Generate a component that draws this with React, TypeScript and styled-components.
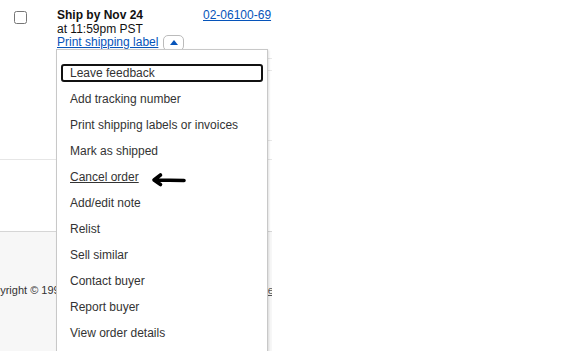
import React from 'react';
import styled, { createGlobalStyle } from 'styled-components';

const GlobalStyle = createGlobalStyle`
    html, body {
        margin: 0;
        padding: 0;
        background: #fff;
        overflow: hidden;
    }
    body {
        font-family: "Liberation Sans", Arial, sans-serif;
        color: #333;
    }
`;

const menuItems = [
    'Leave feedback',
    'Add tracking number',
    'Print shipping labels or invoices',
    'Mark as shipped',
    'Cancel order',
    'Add/edit note',
    'Relist',
    'Sell similar',
    'Contact buyer',
    'Report buyer',
    'View order details',
];

const App: React.FC = () => {
    return (
        <Page>
            <GlobalStyle />
            <Main>
                <OrderRow>
                    <CheckCell>
                        <Checkbox type="checkbox" />
                    </CheckCell>
                    <ShipCell>
                        <ShipLine bold>Ship by Nov 24</ShipLine>
                        <ShipLine>at 11:59pm PST</ShipLine>
                        <LabelLine>
                            <Link href="#">Print shipping label</Link>
                            <Toggle aria-label="Show actions">
                                <Caret />
                            </Toggle>
                        </LabelLine>
                    </ShipCell>
                    <OrderCell>
                        <OrderNumber><Link href="#">02-06100-69</Link></OrderNumber>
                        <SubRow height={11} />
                        <SubRow height={69} />
                    </OrderCell>
                </OrderRow>
                <Gap />
                <Footer>
                    <FooterLine>
                        <FooterText>Copyright © 1995-2020 eBay Inc. All Rights Reserved.</FooterText>
                        <FooterLink href="#">AdChoice</FooterLink>
                    </FooterLine>
                </Footer>
            </Main>

            <Menu>
                {menuItems.map((item, i) => (
                    <MenuItem
                        key={item}
                        href="#"
                        focused={i === 0}
                        hovered={item === 'Cancel order'}
                    >
                        {item}
                    </MenuItem>
                ))}
            </Menu>

            <Arrow width="36" height="16" viewBox="0 0 36 16">
                <path
                    d="M33 8.5 L3.5 8 M9.5 3 L3 8 L9.5 12.5"
                    fill="none"
                    stroke="#000"
                    strokeWidth="3.6"
                    strokeLinecap="round"
                    strokeLinejoin="round"
                />
            </Arrow>
        </Page>
    );
};

export default App;

const Page = styled.div`
    position: relative;
    width: 565px;
    height: 351px;
    display: flex;
    overflow: hidden;
    font-size: 12px;
`;

const Main = styled.div`
    width: 272px;
    display: flex;
    flex-direction: column;
    overflow: hidden;
`;

const OrderRow = styled.div`
    height: 160px;
    display: flex;
    border-bottom: 1px solid #e6e6e6;
    box-sizing: border-box;
`;

const CheckCell = styled.div`
    width: 57px;
    padding: 11px 0 0 14px;
    box-sizing: border-box;
`;

const Checkbox = styled.input`
    margin: 0;
    width: 13px;
    height: 13px;
`;

const ShipCell = styled.div`
    flex: 1;
    padding-top: 9px;
`;

const ShipLine = styled.div<{ bold?: boolean }>`
    line-height: 13.5px;
    font-weight: ${(p) => (p.bold ? 'bold' : 'normal')};
    color: #111;
    white-space: nowrap;
`;

const LabelLine = styled.div`
    display: flex;
    align-items: flex-start;
    gap: 5px;
    line-height: 13.5px;
    white-space: nowrap;
`;

const Link = styled.a`
    color: #0654ba;
    text-decoration: underline;
`;

const Toggle = styled.button`
    width: 21px;
    height: 16px;
    margin-top: -1px;
    padding: 0;
    border: 1px solid #bbb;
    border-radius: 5px;
    background: #fff;
    display: flex;
    justify-content: center;
    padding-top: 4px;
    box-sizing: border-box;
`;

const Caret = styled.span`
    width: 0;
    height: 0;
    border-left: 4px solid transparent;
    border-right: 4px solid transparent;
    border-bottom: 5px solid #0654ba;
`;

const OrderCell = styled.div`
    width: 69px;
    display: flex;
    flex-direction: column;
`;

const OrderNumber = styled.div`
    height: 59px;
    padding-top: 9px;
    line-height: 13.5px;
    box-sizing: border-box;
    border-bottom: 1px solid #e8e8e8;
`;

const SubRow = styled.div<{ height: number }>`
    height: ${(p) => p.height}px;
    border-bottom: 1px solid #e8e8e8;
`;

const Gap = styled.div`
    height: 71px;
`;

const Footer = styled.div`
    flex: 1;
    background: #f7f7f7;
    border-top: 1px solid #d6d6d6;
    padding-top: 52px;
`;

const FooterLine = styled.div`
    display: flex;
    justify-content: space-between;
    gap: 8px;
    margin-left: -20px;
    margin-right: -2px;
    font-size: 11px;
    color: #333;
    white-space: nowrap;
`;

const FooterText = styled.span`
    min-width: 0;
    overflow: hidden;
`;

const FooterLink = styled.a`
    flex-shrink: 0;
    color: #555;
    text-decoration: underline;
`;

const Menu = styled.div`
    position: absolute;
    left: 56px;
    top: 49px;
    width: 212px;
    height: 320px;
    box-sizing: border-box;
    background: #fff;
    border: 1px solid #c8c8c8;
    box-shadow: 1px 1px 2px rgba(0, 0, 0, 0.12);
    padding: 14px 4px 0 4px;
    display: flex;
    flex-direction: column;
    gap: 8px;
`;

const MenuItem = styled.a<{ focused?: boolean; hovered?: boolean }>`
    display: block;
    height: 18px;
    line-height: 14px;
    padding-left: 7px;
    box-sizing: border-box;
    border: 2px solid ${(p) => (p.focused ? '#111' : 'transparent')};
    border-radius: 3px;
    color: #333;
    font-size: 12px;
    text-decoration: ${(p) => (p.hovered ? 'underline' : 'none')};
    white-space: nowrap;
`;

const Arrow = styled.svg`
    position: absolute;
    left: 151px;
    top: 172px;
`;
